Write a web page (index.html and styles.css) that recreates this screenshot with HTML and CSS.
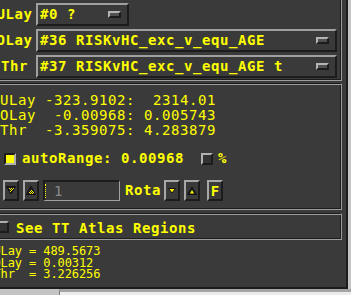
FILE: index.html
```html
<!DOCTYPE html>
<html lang="en">
<head>
  <meta charset="UTF-8">
  <meta name="viewport" content="width=device-width, initial-scale=1.0">
  <title>Layer Ranges</title>
  <link rel="stylesheet" href="styles.css">
</head>
<body>

  <div class="win">
    <div class="frame frame-select">
      <div class="sel-row">
        <span class="sel-label">ULay</span>
        <div class="option-menu short"><span>#0 ?</span><i class="cascade"></i></div>
      </div>
      <div class="sel-row">
        <span class="sel-label">OLay</span>
        <div class="option-menu long"><span>#36 RISKvHC_exc_v_equ_AGE</span><i class="cascade"></i></div>
      </div>
      <div class="sel-row">
        <span class="sel-label">Thr</span>
        <div class="option-menu long"><span>#37 RISKvHC_exc_v_equ_AGE t</span><i class="cascade"></i></div>
      </div>
    </div>

    <div class="frame frame-range">
      <div class="readout">ULay -323.9102:  2314.01
OLay  -0.00968: 0.005743
Thr  -3.359075: 4.283879</div>

      <div class="auto-row">
        <span class="toggle on"></span>
        <span class="bold auto-label">autoRange: 0.00968</span>
        <span class="toggle pct"></span>
        <span class="bold pct-label">%</span>
      </div>

      <div class="tool-row">
        <button class="push first">
          <svg width="12" height="17" viewBox="0 0 12 17">
            <polygon points="1.5,4.5 10.5,4.5 6,12" fill="#1e1e1e" stroke="#111"/>
            <rect x="4" y="6" width="1" height="1" fill="#ff0"/>
            <rect x="6" y="6" width="1" height="1" fill="#ff0"/>
            <rect x="8" y="6" width="1" height="1" fill="#ff0"/>
            <rect x="5" y="7" width="1" height="1" fill="#ff0"/>
            <rect x="7" y="7" width="1" height="1" fill="#ff0"/>
            <rect x="6" y="8" width="1" height="1" fill="#ff0"/>
            <rect x="5" y="9" width="1" height="1" fill="#ff0"/>
          </svg>
        </button>
        <button class="push">
          <svg width="12" height="17" viewBox="0 0 12 17">
            <polygon points="6,4 10.5,12.5 1.5,12.5" fill="#1e1e1e" stroke="#111"/>
            <rect x="6" y="8" width="1" height="1" fill="#ff0"/>
            <rect x="5" y="9" width="1" height="1" fill="#ff0"/>
            <rect x="7" y="9" width="1" height="1" fill="#ff0"/>
            <rect x="4" y="10" width="1" height="1" fill="#ff0"/>
            <rect x="6" y="10" width="1" height="1" fill="#ff0"/>
            <rect x="8" y="10" width="1" height="1" fill="#ff0"/>
            <rect x="5" y="11" width="1" height="1" fill="#ff0"/>
            <rect x="7" y="11" width="1" height="1" fill="#ff0"/>
          </svg>
        </button>
        <div class="field"><span class="caret"></span><span class="field-text">1</span></div>
        <span class="bold rota">Rota</span>
        <button class="push rota-down">
          <svg width="12" height="17" viewBox="0 0 12 17">
            <polygon points="2.5,6.5 9.5,6.5 6,11" fill="#ff0" stroke="#111"/>
          </svg>
        </button>
        <button class="push rota-up">
          <svg width="12" height="17" viewBox="0 0 12 17">
            <polygon points="6,5 10.5,12.5 1.5,12.5" fill="#1e1e1e" stroke="#111"/>
            <polygon points="6,8 8,11.5 4,11.5" fill="#ff0"/>
          </svg>
        </button>
        <button class="push fixed bold">F</button>
      </div>
    </div>

    <div class="frame frame-atlas">
      <span class="toggle"></span>
      <span class="bold atlas-label">See TT Atlas Regions</span>
    </div>

    <div class="values">ULay = 489.5673
OLay = 0.00312
Thr  = 3.226256</div>
  </div>

  <div class="foot">
    <div class="foot-tab"></div>
  </div>

</body>
</html>
```

FILE: styles.css
```css
* {
  margin: 0;
  padding: 0;
  box-sizing: border-box;
}

body {
  width: 351px;
  height: 295px;
  overflow: hidden;
  background: #c4c4c4;
  font-family: 'DejaVu Sans Mono', monospace;
  font-size: 14px;
  line-height: 15px;
  letter-spacing: 0.57px;
  color: #ffff00;
}

.bold {
  font-weight: bold;
}

/* main window, its left and top edges lie outside the shot */
.win {
  width: 358px;
  height: 295px;
  margin: -6px 0 0 -10px;
  background: #3a3a3a;
  border-right: 2px solid #1c1c1c;
  border-bottom: 2px solid #1c1c1c;
  display: flex;
  flex-direction: column;
}

.frame {
  margin: 0 4px 0 2px;
  border: 1px solid;
  border-color: #1c1c1c #9c9c9c #9c9c9c #1c1c1c;
  box-shadow: inset 1px 1px 0 #9c9c9c, inset -1px -1px 0 #1c1c1c;
}

/* layer selectors */
.frame-select {
  padding: 8px 0 2px 3px;
  display: flex;
  flex-direction: column;
  gap: 3px;
}

.sel-row {
  display: flex;
  align-items: center;
  height: 23px;
}

.sel-label {
  width: 37px;
  text-align: center;
  font-weight: bold;
  white-space: nowrap;
}

.option-menu {
  margin-left: 3px;
  height: 23px;
  display: flex;
  align-items: center;
  padding-left: 2px;
  border: 2px solid;
  border-color: #a0a0a0 #1c1c1c #1c1c1c #a0a0a0;
  font-weight: bold;
  white-space: pre;
}

.option-menu.short {
  width: 93px;
}

.option-menu.long {
  width: 301px;
}

.cascade {
  margin-left: auto;
  margin-right: 6px;
  width: 13px;
  height: 7px;
  border: 2px solid;
  border-color: #b4b4b4 #1c1c1c #1c1c1c #b4b4b4;
  background: #505050;
}

/* range readout */
.frame-range {
  margin-top: 2px;
  padding: 9px 0 8px 7px;
}

.readout {
  white-space: pre;
}

.auto-row {
  display: flex;
  align-items: center;
  height: 15px;
  margin-top: 13px;
}

.toggle {
  width: 12px;
  height: 12px;
  border: 2px solid;
  border-color: #b0b0b0 #1c1c1c #1c1c1c #b0b0b0;
  background: #333;
}

.toggle.on {
  margin-left: 4px;
  border-color: #1c1c1c #b0b0b0 #b0b0b0 #1c1c1c;
  background: #ffff00;
}

.auto-label {
  margin-left: 6px;
  white-space: pre;
}

.toggle.pct {
  margin-left: 17px;
}

.pct-label {
  margin-left: 5px;
}

.tool-row {
  display: flex;
  align-items: center;
  height: 21px;
  margin-top: 14px;
}

.push {
  width: 16px;
  height: 21px;
  margin-left: 4px;
  border: 2px solid;
  border-color: #a8a8a8 #1c1c1c #1c1c1c #a8a8a8;
  background: #3a3a3a;
  display: flex;
  align-items: center;
  justify-content: center;
  font-family: inherit;
  font-size: 14px;
  color: #ffff00;
}

.push.first {
  margin-left: 3px;
}

.push svg {
  display: block;
}

.field {
  width: 77px;
  height: 21px;
  margin-left: 4px;
  display: flex;
  align-items: center;
  border: 2px solid;
  border-color: #1c1c1c #a0a0a0 #a0a0a0 #1c1c1c;
  border-bottom-width: 1px;
  border-right-width: 1px;
}

.caret {
  height: 14px;
  border-left: 1px dotted #ffff00;
}

.field-text {
  margin-left: 8px;
  color: #8a8a8a;
}

.rota {
  margin-left: 5px;
}

.push.rota-down {
  margin-left: 3px;
}

.push.fixed {
  margin-left: 7px;
  font-weight: bold;
  letter-spacing: 0;
}

/* atlas toggle */
.frame-atlas {
  margin-top: 3px;
  padding: 7px 0 3px 4px;
  display: flex;
  align-items: flex-start;
}

.atlas-label {
  margin-left: 7px;
}

/* cursor values */
.values {
  margin-top: 6px;
  padding-left: 3.5px;
  font-size: 12px;
  line-height: 11.5px;
  letter-spacing: -0.1px;
  white-space: pre;
}

.foot {
  display: flex;
  height: 6px;
}

.foot-tab {
  flex: 1;
  margin-left: 59px;
  border-top: 3px solid #a4a4a4;
  border-left: 1px solid #7a7a7a;
  background: #ececec;
}
```
